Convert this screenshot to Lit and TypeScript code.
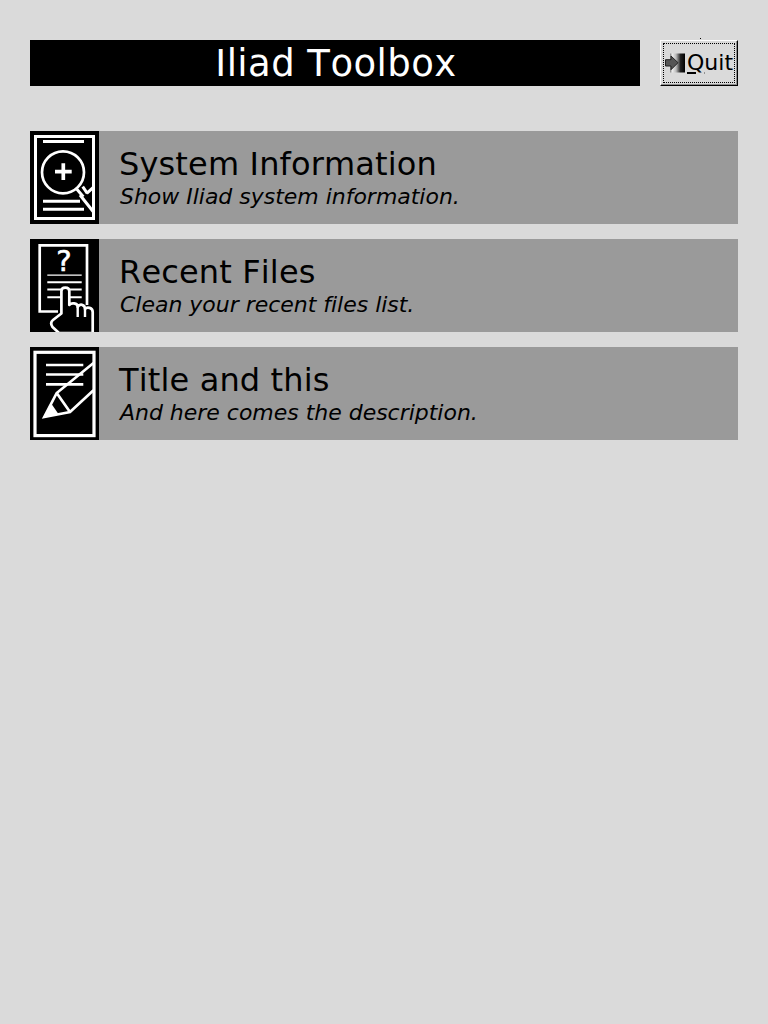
import { css, html, LitElement, svg } from "lit";
import { customElement } from "lit/decorators.js";

const searchIcon = svg`
  <rect x="5.500" y="5.500" width="58" height="82" fill="none" stroke="#fff" stroke-width="3" />
  <path d="M13 10.500H54M13 70.300H50M13 78.200H54" stroke="#fff" stroke-width="3" fill="none" />
  <circle cx="33" cy="41.300" r="21" fill="#000" stroke="#fff" stroke-width="2.700" />
  <path d="M33.300 32.300V49M25 40.700H41.700" stroke="#fff" stroke-width="3.700" fill="none" />
  <path d="M46.700 58l6.600 7.700M52.700 55.700l4.600 6.600M50 64l13.300 16.700M56.700 62.300l6.600-6" stroke="#fff" stroke-width="3" fill="none" />
`;

const helpIcon = svg`
  <path d="M28 72.500H9.700V6.300H57V66" fill="none" stroke="#fff" stroke-width="2.700" />
  <text x="34" y="31.700" text-anchor="middle" font-family="DejaVu Sans" font-size="29" fill="#fff" stroke="#fff" stroke-width="0.600">?</text>
  <path d="M17.300 36.200H51.700" stroke="#fff" stroke-width="1.200" fill="none" />
  <path d="M17.300 43.300H51.700M17.300 50.500H51.700M17.300 58.300H51.700" stroke="#fff" stroke-width="2.100" fill="none" />
  <path d="M29 94L22.500 88C20.500 85 20.500 83 23 81L31.400 74.500V52C31.400 49.500 33 48.600 35.300 48.600C37.600 48.600 39.300 49.500 39.300 52V66C41 63.500 47.700 63.500 47.700 68C49.500 64.500 55 65 55 70C57 67.500 62.700 68.500 62.700 73V94Z" fill="#000" stroke="#fff" stroke-width="2.700" stroke-linejoin="round" />
  <path d="M47.700 68V78M55 70V78" fill="none" stroke="#fff" stroke-width="2.400" />
`;

const editIcon = svg`
  <rect x="5" y="5.300" width="59" height="83.300" fill="none" stroke="#fff" stroke-width="3.200" />
  <path d="M16 18H53.300M16 27.500H53.300M16 37.300H53.300" stroke="#fff" stroke-width="2.700" fill="none" />
  <path d="M63.500 16L26.700 46 14.300 70 40 65 63.500 43.300M26.700 46L40 65" fill="none" stroke="#fff" stroke-width="2.700" />
  <path d="M14 70.700L21.700 57.300 28.300 66.700z" fill="#fff" />
`;

const tools = [
  { title: "System Information", description: "Show Iliad system information.", icon: searchIcon },
  { title: "Recent Files", description: "Clean your recent files list.", icon: helpIcon },
  { title: "Title and this", description: "And here comes the description.", icon: editIcon },
];

@customElement("app-root")
export class AppRoot extends LitElement {
  render() {
    return html`
      <main>
        <header>
          <h1>Iliad Toolbox</h1>
          <button>
            <span class="focus">
              <svg class="exit" width="20" height="20" viewBox="0 0 20 20">
                <defs>
                  <linearGradient id="door" x1="0" x2="1" y1="0" y2="0">
                    <stop offset="0" stop-color="#777" />
                    <stop offset="0.15" stop-color="#eee" />
                    <stop offset="0.4" stop-color="#bbb" />
                    <stop offset="0.7" stop-color="#222" />
                    <stop offset="1" stop-color="#000" />
                  </linearGradient>
                </defs>
                <rect x="5" y="0.500" width="15" height="19" fill="url(#door)" />
                <path d="M0.500 6.700H6V3L13 9.700 6 16.700V13H0.500z" fill="#555" stroke="#222" />
              </svg>
              <span class="label"><u>Q</u>uit</span>
            </span>
          </button>
        </header>
        <section>
          ${tools.map(
            (tool) => html`
              <article>
                <svg class="icon" width="69" height="93" viewBox="0 0 69 93">
                  <rect width="69" height="93" fill="#000" />
                  ${tool.icon}
                </svg>
                <div class="text">
                  <h2>${tool.title}</h2>
                  <p>${tool.description}</p>
                </div>
              </article>
            `,
          )}
        </section>
      </main>
    `;
  }

  static styles = css`
    :host {
      display: block;
      min-height: 1024px;
      background: #dadada;
      font-family: "DejaVu Sans", sans-serif;
      font-kerning: none;
      color: #000;
    }

    main {
      padding: 40px 30px 0;
      position: relative;
    }

    main::before {
      content: "";
      position: absolute;
      left: 700px;
      top: 38px;
      width: 1px;
      height: 1px;
      background: #000;
    }

    header {
      display: flex;
      gap: 20px;
      height: 46px;
      margin-bottom: 45px;
    }

    h1 {
      flex: none;
      box-sizing: border-box;
      width: 610px;
      margin: 0;
      padding: 1px 0 0 2px;
      background: #000;
      color: #fff;
      font-size: 37px;
      font-weight: 400;
      letter-spacing: 0.45px;
      line-height: 46px;
      text-align: center;
    }

    button {
      flex: none;
      width: 78px;
      height: 46px;
      box-sizing: border-box;
      margin: 0;
      padding: 2px;
      background: #dadada;
      border: 1px solid;
      border-color: #fff #000 #000 #fff;
      box-shadow: inset -1px -1px 0 #8c8c8c;
      font: inherit;
      font-kerning: none;
      color: inherit;
    }

    .focus {
      box-sizing: border-box;
      display: flex;
      align-items: center;
      gap: 2px;
      height: 100%;
      border: 1px dotted #000;
      padding-left: 1px;
      font-size: 22px;
      line-height: 1;
    }

    .exit {
      flex: none;
    }

    section {
      display: flex;
      flex-direction: column;
      gap: 15px;
    }

    article {
      display: flex;
      height: 93px;
      background: #9a9a9a;
    }

    .icon {
      display: block;
      flex: none;
    }

    .text {
      padding: 14px 0 0 20px;
    }

    h2 {
      margin: 0;
      font-size: 32px;
      font-weight: 400;
      letter-spacing: 0.15px;
      line-height: 38px;
    }

    p {
      margin: 1px 0 0 1px;
      font-size: 22px;
      font-style: italic;
      letter-spacing: -0.02px;
      line-height: 26px;
    }
  `;
}
